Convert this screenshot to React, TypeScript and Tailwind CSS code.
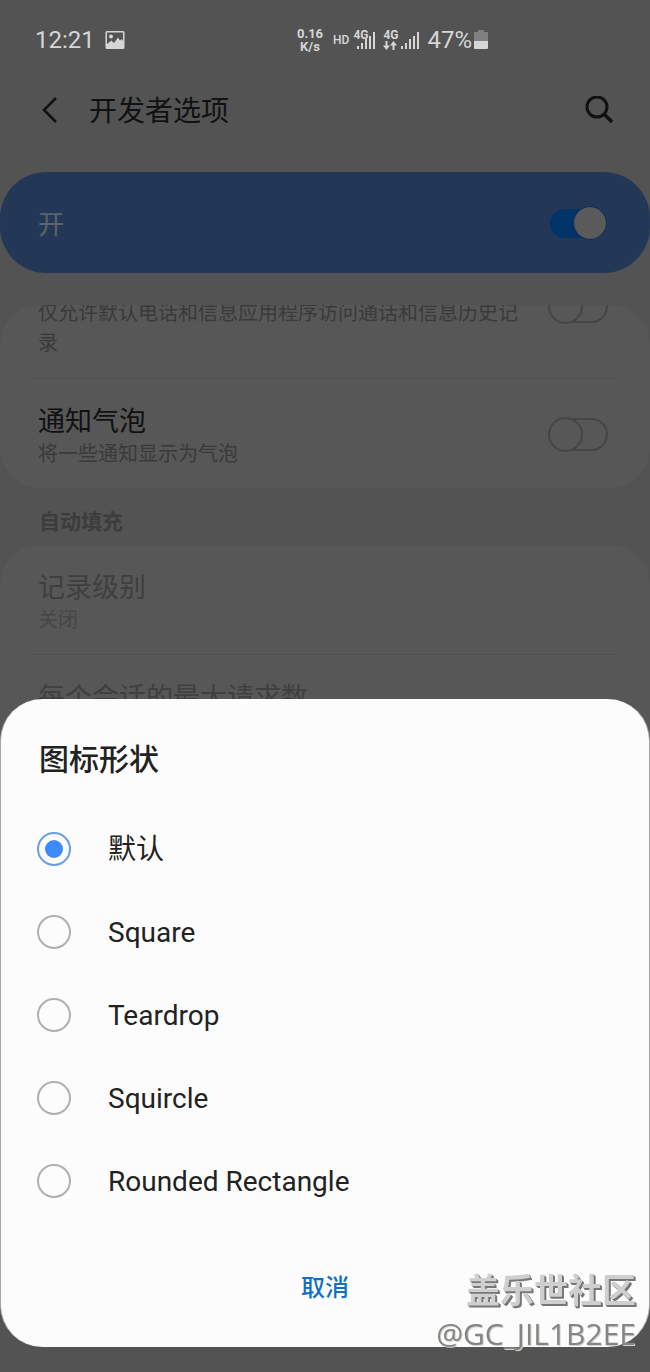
import * as React from "react"

const SHAPES = ["默认", "Square", "Teardrop", "Squircle", "Rounded Rectangle"]

function SignalBars() {
  return (
    <svg viewBox="0 0 18 18" className="h-[18px] w-[18px]" fill="currentColor" aria-hidden="true">
      <rect x="0" y="14" width="2" height="3" />
      <rect x="4" y="11" width="2" height="6" />
      <rect x="8" y="7" width="2" height="10" />
      <rect x="12" y="4" width="2" height="13" />
      <rect x="16" y="0" width="2" height="17" />
    </svg>
  )
}

function StatusBar() {
  return (
    <div className="flex h-20 items-center pl-[35px] text-[#d6d6d6]">
      <span className="text-[24px] leading-8">12:21</span>
      <svg viewBox="0 0 20 20" className="ml-2.5 size-5" aria-hidden="true">
        <path
          fill="currentColor"
          fillRule="evenodd"
          d="M2 1h16a1.500 1.500 0 0 1 1.500 1.500v15a1.500 1.500 0 0 1-1.500 1.500H2A1.500 1.500 0 0 1 .5 17.500v-15A1.500 1.500 0 0 1 2 1Zm0 1.500V14l4.500-3.500L9 13l4-5.500 2 3 1.500-1.500L18 11V2.500Z"
        />
        <circle cx="6" cy="6.500" r="1.900" fill="currentColor" />
      </svg>

      <div className="ml-auto mr-[162px] flex items-center">
        <div className="text-center text-[13px] font-bold leading-[13px]">
          <p>0.16</p>
          <p>K/s</p>
        </div>
        <span className="ml-2.5 text-[12px] font-medium leading-4">HD</span>
        <div className="relative ml-2 h-5 w-[18px] pt-0.5">
          <span className="absolute -left-1 -top-px text-[12px] font-bold leading-3">4G</span>
          <SignalBars />
        </div>
        <div className="ml-2 flex h-5 w-4 flex-col items-start">
          <span className="text-[12px] font-bold leading-[11px]">4G</span>
          <svg viewBox="0 0 14 9" className="h-[9px] w-3.5" fill="currentColor" aria-hidden="true">
            <path d="M2.500 0h2v4.500H7L3.500 9 0 4.500h2.500ZM9.500 9h2V4.500H14L10.500 0 7 4.500h2.500Z" />
          </svg>
        </div>
        <div className="ml-0.5 h-5 w-[18px] pt-0.5">
          <SignalBars />
        </div>
        <span className="ml-2 text-[24px] leading-8">47%</span>
        <svg viewBox="0 0 14 20" className="ml-0.5 h-5 w-3.5" aria-hidden="true">
          <path fill="#808080" d="M4 0h6v2h3a1 1 0 0 1 1 1v9H0V3a1 1 0 0 1 1-1h3Z" />
          <path fill="currentColor" d="M0 11h14v7a1 1 0 0 1-1 1H1a1 1 0 0 1-1-1Z" />
        </svg>
      </div>
    </div>
  )
}

function Toggle({ label }: { label: string }) {
  return (
    <input
      type="checkbox"
      role="switch"
      aria-label={label}
      className="relative h-[35px] w-[60px] shrink-0 appearance-none before:absolute before:inset-y-px before:left-1 before:right-0 before:rounded-full before:border-2 before:border-[#454545] after:absolute after:left-0 after:top-0 after:size-[35px] after:rounded-full after:border-2 after:border-[#454545] after:bg-[#575757]"
    />
  )
}

function Row({ title, subtitle, disabled, children }: { title: string; subtitle?: string; disabled?: boolean; children?: React.ReactNode }) {
  return (
    <div className="flex items-center justify-between pb-[22px] pl-[38px] pr-[42px] pt-[23px]">
      <div>
        <p className={`text-[27px] leading-10 ${disabled ? "text-[#3f3f3f]" : "text-[#111111]"}`}>{title}</p>
        {subtitle && (
          <p className={`text-[20px] leading-6 ${disabled ? "text-[#464646]" : "text-[#3a3a3a]"}`}>{subtitle}</p>
        )}
      </div>
      {children}
    </div>
  )
}

function Divider() {
  return <hr className="mx-8 border-t border-[#505050]" />
}

function ShapeDialog() {
  const [shape, setShape] = React.useState(SHAPES[0])

  return (
    <div
      role="dialog"
      aria-modal="true"
      aria-labelledby="shape-title"
      className="fixed inset-x-0 bottom-[25px] rounded-[42px] border-x border-[#a6a6a6] bg-[#fcfcfc] pb-[34px] pt-10"
    >
      <h2 id="shape-title" className="px-[38px] text-[30px] font-medium leading-[42px] text-[#222222]">图标形状</h2>

      <fieldset aria-labelledby="shape-title" className="mt-[26px]">
        {SHAPES.map((s) => (
          <label key={s} className="flex h-[83px] items-center gap-[37px] px-9">
            <input
              type="radio"
              name="shape"
              value={s}
              checked={shape === s}
              onChange={() => setShape(s)}
              className="flex size-[34px] shrink-0 appearance-none items-center justify-center rounded-full border-2 border-[#b0b0b0] checked:border-[#6a9de2] checked:before:size-[18px] checked:before:rounded-full checked:before:bg-[#3d8bf8]"
            />
            <span className="pt-[3px] text-[28px] leading-10 text-[#222222]">{s}</span>
          </label>
        ))}
      </fieldset>

      <div className="mt-[41px] flex justify-center">
        <button type="button" className="h-[50px] px-8 text-[24px] font-medium text-[#1170c2]">取消</button>
      </div>
    </div>
  )
}

export default function App() {
  return (
    <main className="flex h-screen flex-col overflow-hidden bg-[#535353] font-[Roboto,'Noto_Sans_CJK_SC',sans-serif]">
      <StatusBar />

      {/* Title bar */}
      <header className="flex h-[60px] items-center pl-[39px] pr-[37px] text-[#111111]">
        <button type="button" aria-label="返回" className="flex">
          <svg viewBox="0 0 20 28" className="h-7 w-5" fill="none" stroke="currentColor" strokeWidth="2.500" aria-hidden="true">
            <path d="M17 2 5 14l12 12" />
          </svg>
        </button>
        <h1 className="ml-[30px] pt-1 text-[28px] leading-10">开发者选项</h1>
        <button type="button" aria-label="搜索" className="ml-auto flex">
          <svg viewBox="0 0 28 28" className="size-7" fill="none" stroke="currentColor" strokeWidth="3" aria-hidden="true">
            <circle cx="12" cy="11" r="10" />
            <path d="m19 18 8 8" strokeWidth="3.500" />
          </svg>
        </button>
      </header>

      {/* Master switch */}
      <label className="mt-8 flex h-[101px] shrink-0 items-center justify-between rounded-[46px] bg-[#233857] pl-[38px] pr-11">
        <span className="pt-1 text-[26px] leading-10 text-[#5a646c]">开</span>
        <input
          type="checkbox"
          role="switch"
          defaultChecked
          className="relative h-8 w-14 appearance-none before:absolute before:inset-x-0 before:top-0.5 before:h-[29px] before:rounded-full before:bg-[#003368] after:absolute after:right-0 after:top-0 after:size-8 after:rounded-full after:bg-[#5a5a5a] after:outline after:outline-[#162f55]"
        />
      </label>

      {/* Scrolled settings list */}
      <div className="mt-8 min-h-0 flex-1 overflow-hidden rounded-t-[40px]">
        <section className="-mt-4 rounded-b-[40px] bg-[#575757]">
          <div className="flex items-start justify-between gap-5 pb-5 pl-[38px] pr-[42px]">
            <p className="pt-[9px] text-[20px] leading-[30px] text-[#3a3a3a]">仅允许默认电话和信息应用程序访问通话和信息历史记录</p>
            <Toggle label="仅允许默认电话和信息应用程序访问" />
          </div>
          <Divider />
          <Row title="通知气泡" subtitle="将一些通知显示为气泡">
            <Toggle label="通知气泡" />
          </Row>
        </section>

        <h2 className="px-[39px] pb-2 pt-[19px] text-[21px] font-bold leading-[30px] text-[#3c3c3c]">自动填充</h2>

        <section className="rounded-t-[40px] bg-[#575757]">
          <Row title="记录级别" subtitle="关闭" disabled />
          <Divider />
          <Row title="每个会话的最大请求数" disabled />
        </section>
      </div>

      <ShapeDialog />

      {/* Community watermark */}
      <div className="pointer-events-none fixed bottom-[18px] right-3.5 text-right">
        <p className="text-[34px] font-bold leading-[46px] text-[#cfcfcf] [text-shadow:1px_1px_0_#777777,2px_2px_0_#777777]">盖乐世社区</p>
        <p className="font-['Open_Sans',sans-serif] text-[30px] leading-10 text-[#858585] [text-shadow:1px_1px_0_#d6cfc6]">@GC_JIL1B2EE</p>
      </div>
    </main>
  )
}
